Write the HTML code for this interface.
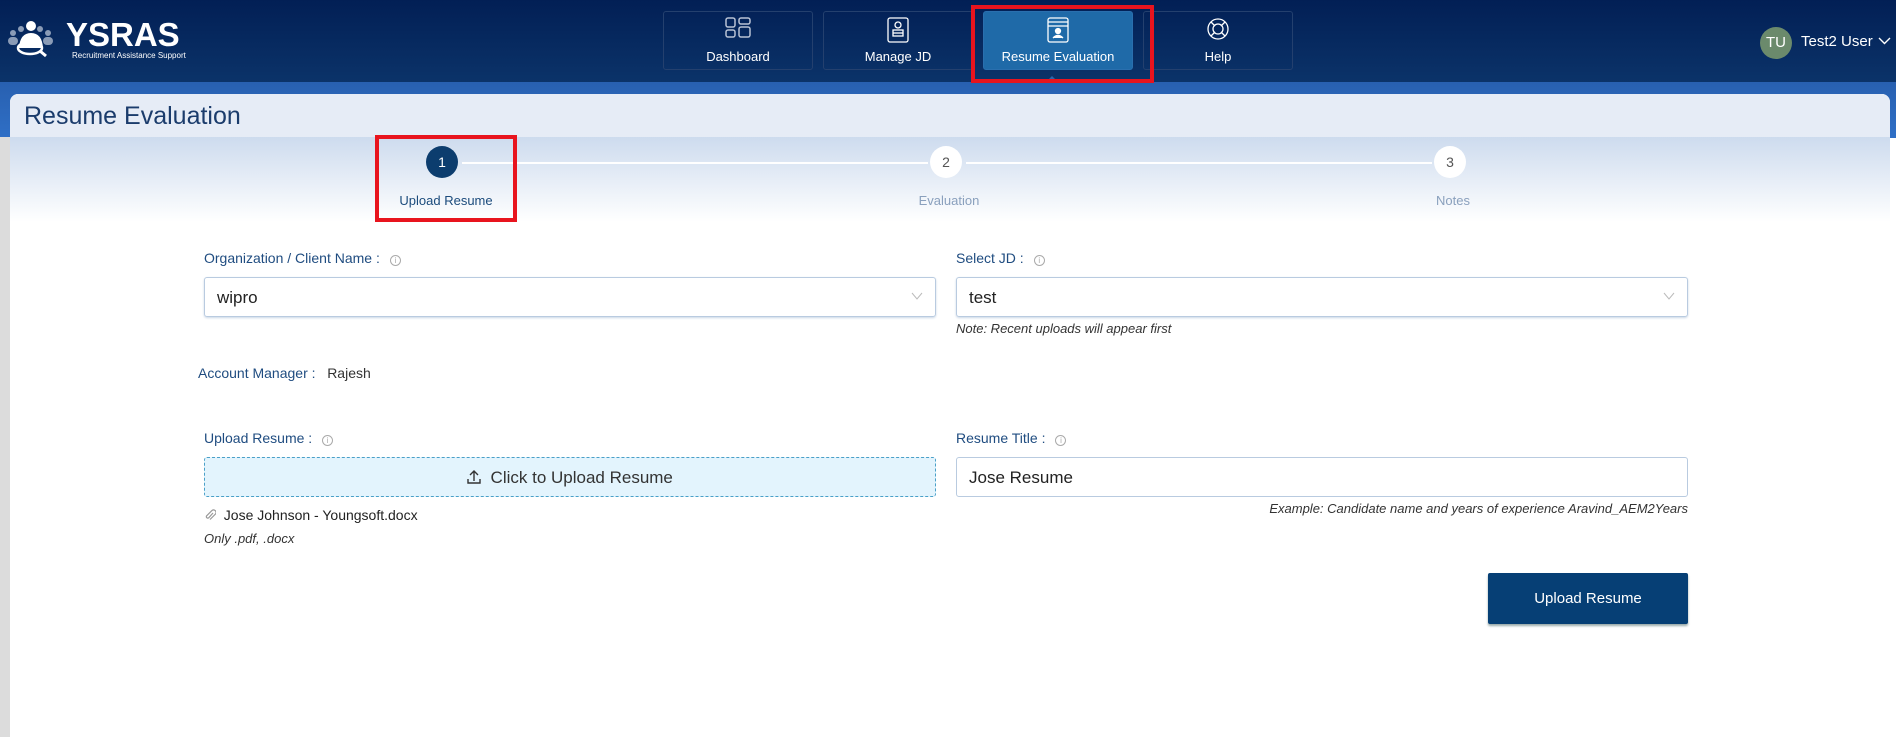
<!DOCTYPE html>
<html><head><meta charset="utf-8"><style>
*{box-sizing:border-box;margin:0;padding:0}
body{width:1896px;height:728px;overflow:hidden;font-family:"Liberation Sans",sans-serif;background:#fff;position:relative}
.hdr{position:absolute;left:0;top:0;width:1896px;height:82px;background:linear-gradient(#021f55,#0b3369)}
.band{position:absolute;left:0;top:82px;width:1896px;height:56px;background:linear-gradient(#2860b0,#2f6fc6)}
.side{position:absolute;left:0;top:137px;width:10px;height:600px;background:#dcdcdc}
.card{position:absolute;left:10px;top:94px;width:1880px;height:640px;background:#fff;border-radius:8px 8px 0 0;overflow:hidden}
.ttl{height:43px;background:#e6ecf6;font-size:25px;color:#1b3c6c;padding:8px 0 0 14px}
.stp{position:absolute;left:0;top:43px;width:100%;height:85px;background:linear-gradient(#cddbee,#fff)}
.nav{position:absolute;top:11px;width:150px;height:59px;border:1px solid #24406e;border-radius:3px;color:#fff;font-size:13px;text-align:center}
.nav .ic{height:28px;padding-top:5px}
.nav svg{display:block;margin:0 auto}
.nav span{display:block;margin-top:9px}
.red{position:absolute;border:4px solid #e8141e}
.circ{position:absolute;width:32px;height:32px;border-radius:50%;background:#fff;color:#555;font-size:14px;text-align:center;line-height:32px}
.sl{position:absolute;font-size:13px;color:#8aa0bd;transform:translateX(-50%)}
.line{position:absolute;height:2px;background:#fff}
.lab{position:absolute;font-size:14px;color:#1f4c80}
.lab i{display:inline-block;width:11px;height:11px;border:1px solid #aaa;border-radius:50%;margin-left:10px;vertical-align:0px;font-style:normal;font-size:8px;color:#aaa;text-align:center;line-height:9px}
.inp{position:absolute;height:40px;border:1px solid #b9cbe0;border-radius:3px;font-size:17px;color:#222;padding:10px 0 0 12px;box-shadow:0 1px 2px #c9d6e6}
.chev{position:absolute;right:12px;top:14px}
.it{position:absolute;font-size:13px;font-style:italic;color:#333}
</style></head><body>
<div class="hdr"></div>
<div class="band"></div>
<div class="side"></div>
<!-- logo -->
<svg style="position:absolute;left:4px;top:18px" width="56" height="42" viewBox="0 0 56 42">
<g fill="#8a9bb6"><circle cx="9" cy="15" r="3"/><rect x="4" y="19" width="10" height="8" rx="4"/><circle cx="44" cy="15" r="3"/><rect x="39" y="19" width="10" height="8" rx="4"/><circle cx="17" cy="11" r="3"/><circle cx="36" cy="11" r="3"/></g>
<g fill="#fff"><circle cx="27" cy="8" r="5"/><path d="M15 30 Q16 15 27 15 Q38 15 39 30Z"/></g>
<ellipse cx="26" cy="30" rx="12" ry="6" fill="none" stroke="#fff" stroke-width="2.5"/>
<path d="M36 33 L42 38" stroke="#fff" stroke-width="3"/>
</svg>
<div style="position:absolute;left:66px;top:16px;color:#fff;font-weight:bold;font-size:33px;letter-spacing:0">YSRAS</div>
<div style="position:absolute;left:72px;top:51px;color:#fff;font-size:8px">Recruitment Assistance Support</div>
<!-- nav -->
<div class="nav" style="left:663px"><div class="ic"><svg width="26" height="22" viewBox="0 0 26 22" fill="none" stroke="#b8c2d4" stroke-width="1.5"><rect x="1" y="1" width="9" height="9" rx="2"/><rect x="14" y="1" width="11" height="6" rx="2"/><rect x="1" y="13" width="9" height="7" rx="2"/><rect x="14" y="10" width="11" height="10" rx="2"/></svg></div><span>Dashboard</span></div>
<div class="nav" style="left:823px"><div class="ic"><svg width="22" height="26" viewBox="0 0 22 26" fill="none" stroke="#fff" stroke-width="1.3"><rect x="1" y="1" width="20" height="24" rx="2"/><circle cx="11" cy="8" r="3"/><rect x="6" y="13" width="10" height="6"/><path d="M6 16h10"/></svg></div><span>Manage JD</span></div>
<div class="nav" style="left:983px;background:#1f6aa8;border-color:#2a6fae"><div class="ic"><svg width="22" height="26" viewBox="0 0 22 26" fill="none" stroke="#fff" stroke-width="1.3"><rect x="1" y="1" width="20" height="24" rx="2"/><path d="M1 5h20M1 9h20"/><circle cx="11" cy="14" r="2.5" fill="#fff"/><path d="M6 21q5-5 10 0" fill="#fff"/></svg></div><span>Resume Evaluation</span></div>
<div style="position:absolute;left:1046px;top:76px;border-left:6px solid transparent;border-right:6px solid transparent;border-bottom:6px solid #2a66ad"></div>
<div class="nav" style="left:1143px"><div class="ic"><svg width="24" height="24" viewBox="0 0 24 24" fill="none" stroke="#fff" stroke-width="1.3"><circle cx="12" cy="12" r="10"/><circle cx="12" cy="12" r="5"/><path d="M5 5l4 4M19 5l-4 4M5 19l4-4M19 19l-4-4"/></svg></div><span>Help</span></div>
<div class="red" style="left:971px;top:5px;width:183px;height:78px"></div>
<!-- user -->
<div style="position:absolute;left:1760px;top:27px;width:32px;height:32px;border-radius:50%;background:#6b8a6c;color:#fff;font-size:15px;text-align:center;line-height:32px">TU</div>
<div style="position:absolute;left:1801px;top:33px;color:#fff;font-size:15px">Test2 User</div>
<svg style="position:absolute;left:1878px;top:37px" width="13" height="8" viewBox="0 0 13 8"><path d="M1 1l5.5 5.5L12 1" stroke="#fff" fill="none" stroke-width="1.4"/></svg>
<!-- card -->
<div class="card">
<div class="ttl">Resume Evaluation</div>
<div class="stp"></div>
</div>
<div class="line" style="left:462px;top:162px;width:466px"></div>
<div class="line" style="left:966px;top:162px;width:466px"></div>
<div class="circ" style="left:426px;top:146px;background:#0c3d6e;color:#fff">1</div>
<div class="circ" style="left:930px;top:146px">2</div>
<div class="circ" style="left:1434px;top:146px">3</div>
<div class="sl" style="left:446px;top:193px;color:#1b4b7c">Upload Resume</div>
<div class="sl" style="left:949px;top:193px">Evaluation</div>
<div class="sl" style="left:1453px;top:193px">Notes</div>
<div class="red" style="left:375px;top:135px;width:142px;height:87px"></div>
<!-- form -->
<div class="lab" style="left:204px;top:250px">Organization / Client Name :<i>i</i></div>
<div class="inp" style="left:204px;top:277px;width:732px">wipro<svg class="chev" width="12" height="8" viewBox="0 0 12 8"><path d="M1 1l5 6 5-6" stroke="#bbb" fill="none"/></svg></div>
<div class="lab" style="left:956px;top:250px">Select JD :<i>i</i></div>
<div class="inp" style="left:956px;top:277px;width:732px">test<svg class="chev" width="12" height="8" viewBox="0 0 12 8"><path d="M1 1l5 6 5-6" stroke="#bbb" fill="none"/></svg></div>
<div class="it" style="left:956px;top:321px">Note: Recent uploads will appear first</div>
<div class="lab" style="left:198px;top:365px">Account Manager :&nbsp;&nbsp;&nbsp;<span style="color:#333">Rajesh</span></div>
<div class="lab" style="left:204px;top:430px">Upload Resume :<i>i</i></div>
<div style="position:absolute;left:204px;top:457px;width:732px;height:40px;border:1px dashed #4aa0c8;border-radius:3px;background:#e3f4fd;text-align:center;font-size:17px;color:#333;padding-top:10px"><svg width="14" height="14" viewBox="0 0 14 14" style="vertical-align:-1px"><path d="M7 11V1M3 5l4-4 4 4M1 9v4h12V9" stroke="#333" fill="none" stroke-width="1.4"/></svg>&nbsp; Click to Upload Resume</div>
<div style="position:absolute;left:204px;top:507px;font-size:14px;color:#222"><svg width="12" height="14" viewBox="0 0 12 14" style="vertical-align:-2px"><path d="M9 5L4.5 10a1.5 1.5 0 0 1-2-2L8 2.5a2.5 2.5 0 0 1 3.5 3.5L6 11.5" stroke="#999" fill="none" stroke-width="1.2"/></svg>&nbsp; Jose Johnson - Youngsoft.docx</div>
<div class="it" style="left:204px;top:531px">Only .pdf, .docx</div>
<div class="lab" style="left:956px;top:430px">Resume Title :<i>i</i></div>
<div class="inp" style="left:956px;top:457px;width:732px;box-shadow:none">Jose Resume</div>
<div class="it" style="left:1000px;width:688px;text-align:right;top:501px">Example: Candidate name and years of experience Aravind_AEM2Years</div>
<div style="position:absolute;left:1488px;top:573px;width:200px;height:51px;background:#063f75;border-radius:2px;color:#fff;font-size:15px;text-align:center;line-height:51px;box-shadow:0 2px 2px #9aa">Upload Resume</div>
</body></html>
